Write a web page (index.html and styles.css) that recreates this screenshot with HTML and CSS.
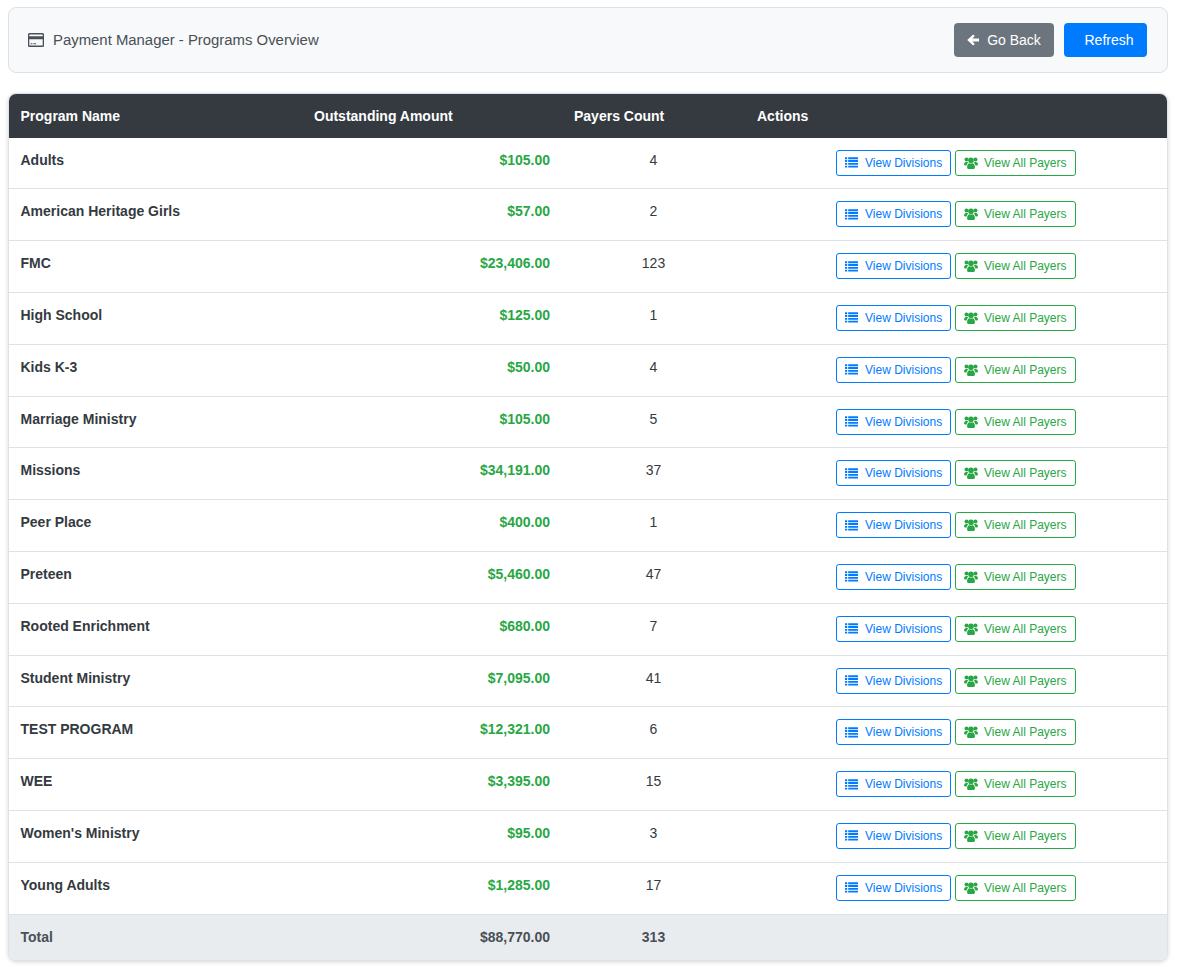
FILE: index.html
```html
<!DOCTYPE html>
<html lang="en">
<head>
    <meta charset="UTF-8">
    <meta name="viewport" content="width=device-width, initial-scale=1.0">
    <title>Payment Manager - Programs Overview</title>
    <link rel="stylesheet" href="styles.css">
</head>
<body>
    <svg class="icon-defs" width="0" height="0" aria-hidden="true">
        <symbol id="i-list" viewBox="0 0 13 11">
            <path d="M0 .3h2.2v1.9H0zM3.2 .3H13v1.9H3.2zM0 3.1h2.2V5H0zM3.2 3.1H13V5H3.2zM0 5.9h2.2v1.9H0zM3.2 5.9H13v1.9H3.2zM0 8.7h2.2v1.9H0zM3.2 8.7H13v1.9H3.2z"/>
        </symbol>
        <symbol id="i-users" viewBox="0 0 14 12">
            <circle cx="2.5" cy="2.6" r="2"/>
            <circle cx="11.5" cy="2.6" r="2"/>
            <circle cx="7" cy="3.2" r="2.8"/>
            <path d="M0 7.4C0 6 .9 5 2.1 5h.9c.6 0 1.1.2 1.5.5-1 .7-1.7 1.7-1.9 2.9H.9C.4 8.4 0 8 0 7.6zM14 7.4C14 6 13.1 5 11.9 5H11c-.6 0-1.1.2-1.5.5 1 .7 1.7 1.7 1.9 2.9h1.7c.5 0 .9-.4.9-.8z"/>
            <path d="M3.1 10C3.1 8 4.3 6.2 5.6 6.2c.4 0 .8.3 1.4.3s1-.3 1.4-.3c1.3 0 2.5 1.8 2.5 3.8v.8c0 .7-.5 1.2-1.1 1.2H4.2c-.6 0-1.1-.5-1.1-1.2z"/>
        </symbol>
    </svg>

    <header class="page-header">
        <h1 class="page-title">
            <svg class="title-icon" viewBox="0 0 16 14" aria-hidden="true">
                <path fill-rule="evenodd" d="M1.6 0h12.8C15.3 0 16 .7 16 1.6v10.8c0 .9-.7 1.6-1.6 1.6H1.6C.7 14 0 13.3 0 12.4V1.6C0 .7.7 0 1.6 0zM1.3 1.4v1.9h13.4V1.4zM1.3 6.2v6.4h13.4V6.2zM2.6 10.2h1.8v1.1H2.6zM5.4 10.2h2.6v1.1H5.4z"/>
            </svg>
            <span class="title-text">Payment Manager - Programs Overview</span>
        </h1>
        <div class="header-actions">
            <button class="btn btn-secondary" type="button">
                <svg class="back-icon" viewBox="0 0 12 12" aria-hidden="true">
                    <path d="M6.2.4l1.6 1.6-2.5 2.4H12v3.2H5.3l2.5 2.4-1.6 1.6L.2 6z"/>
                </svg>
                Go Back
            </button>
            <button class="btn btn-primary" type="button">Refresh</button>
        </div>
    </header>

    <div class="table-card">
        <table class="programs-table">
            <colgroup>
                <col class="col-name">
                <col class="col-amount">
                <col class="col-count">
                <col class="col-actions">
            </colgroup>
            <thead>
                <tr>
                    <th>Program Name</th>
                    <th>Outstanding Amount</th>
                    <th>Payers Count</th>
                    <th>Actions</th>
                </tr>
            </thead>
            <tbody id="program-rows"></tbody>
            <tfoot>
                <tr>
                    <td>Total</td>
                    <td class="amount">$88,770.00</td>
                    <td class="count">313</td>
                    <td></td>
                </tr>
            </tfoot>
        </table>
    </div>

    <script>
        const programs = [
            ["Adults", "$105.00", 4],
            ["American Heritage Girls", "$57.00", 2],
            ["FMC", "$23,406.00", 123],
            ["High School", "$125.00", 1],
            ["Kids K-3", "$50.00", 4],
            ["Marriage Ministry", "$105.00", 5],
            ["Missions", "$34,191.00", 37],
            ["Peer Place", "$400.00", 1],
            ["Preteen", "$5,460.00", 47],
            ["Rooted Enrichment", "$680.00", 7],
            ["Student Ministry", "$7,095.00", 41],
            ["TEST PROGRAM", "$12,321.00", 6],
            ["WEE", "$3,395.00", 15],
            ["Women's Ministry", "$95.00", 3],
            ["Young Adults", "$1,285.00", 17]
        ];

        let rowsHTML = "";
        programs.forEach(item => {
            rowsHTML += `<tr>
                <td class="name">${item[0]}</td>
                <td class="amount">${item[1]}</td>
                <td class="count">${item[2]}</td>
                <td class="actions">
                    <button class="btn-sm btn-outline-blue" type="button"><svg class="sm-icon list-icon"><use href="#i-list"/></svg>View Divisions</button>
                    <button class="btn-sm btn-outline-green" type="button"><svg class="sm-icon users-icon"><use href="#i-users"/></svg>View All Payers</button>
                </td>
            </tr>`;
        });
        document.getElementById("program-rows").innerHTML = rowsHTML;
    </script>
</body>
</html>
```

FILE: styles.css
```css
body {
    margin: 0;
    padding: 7px 10px 10px 8px;
    background-color: #fff;
    color: #212529;
    font-family: "Liberation Sans", Arial, sans-serif;
    font-size: 14px;
}

.icon-defs {
    display: block;
    height: 0;
}

/* Top bar */
.page-header {
    display: flex;
    align-items: center;
    justify-content: space-between;
    box-sizing: border-box;
    height: 66px;
    padding: 0 20px 0 19px;
    margin-bottom: 20px;
    background-color: #f8f9fa;
    border: 1px solid #dee2e6;
    border-radius: 8px;
}

.page-title {
    display: flex;
    align-items: center;
    gap: 9px;
    margin: 0;
    color: #495057;
    font-size: 14.9px;
    font-weight: 400;
}

.title-text {
    padding-bottom: 1px;
}

.title-icon {
    width: 16px;
    height: 14px;
    fill: #495057;
}

.header-actions {
    display: flex;
    gap: 10px;
}

.btn {
    display: flex;
    align-items: center;
    justify-content: center;
    height: 34px;
    padding: 0;
    border: none;
    border-radius: 4px;
    color: #fff;
    font-family: inherit;
    font-size: 14px;
}

.btn-secondary {
    width: 100px;
    gap: 8px;
    background-color: #6c757d;
}

.btn-primary {
    width: 83px;
    padding-left: 7px;
    background-color: #007bff;
}

.back-icon {
    width: 12px;
    height: 12px;
    fill: #fff;
}

/* Table */
.table-card {
    overflow: hidden;
    background-color: #fff;
    border: 1px solid #dee2e6;
    border-radius: 8px;
    box-shadow: 0 1px 4px rgba(0, 0, 0, 0.16);
}

.programs-table {
    width: 100%;
    border-collapse: collapse;
    table-layout: fixed;
}

.col-name { width: 293px; }
.col-amount { width: 260px; }
.col-count { width: 183px; }

th {
    height: 43.6px;
    padding: 0 12px;
    background-color: #343a40;
    color: #fff;
    font-size: 14px;
    font-weight: 700;
    text-align: left;
}

th:first-child,
td:first-child {
    padding-left: 11.5px;
}

tbody td {
    box-sizing: border-box;
    height: 51.8px;
    padding: 12px 12px 0;
    border-bottom: 1px solid #dee2e6;
    vertical-align: top;
    line-height: 20px;
}

tbody tr:first-child td {
    height: 51.3px;
}

.name {
    color: #343a40;
    font-weight: 700;
}

td.amount {
    color: #28a745;
    font-weight: 700;
    text-align: right;
}

td.count {
    color: #343a40;
    text-align: center;
}

td.actions {
    font-size: 0;
    text-align: center;
}

tfoot td {
    box-sizing: border-box;
    height: 45.9px;
    padding: 0 12px 1px;
    background-color: #e9ecef;
    color: #495057;
    font-weight: 700;
}

tfoot td.amount {
    color: #495057;
}

tfoot td.count {
    color: #495057;
    font-weight: 700;
}

.btn-sm {
    display: inline-flex;
    align-items: center;
    box-sizing: border-box;
    height: 26px;
    padding: 0 0 0 8px;
    background-color: #fff;
    border: 1px solid;
    border-radius: 3px;
    font-family: inherit;
    font-size: 12px;
    white-space: nowrap;
    vertical-align: top;
}

.btn-outline-blue {
    width: 115px;
    margin-right: 4px;
    border-color: #007bff;
    color: #007bff;
}

.btn-outline-green {
    width: 121px;
    border-color: #28a745;
    color: #28a745;
}

.sm-icon {
    flex: none;
    fill: currentColor;
}

.list-icon {
    width: 13px;
    height: 11px;
    margin-right: 7px;
}

.users-icon {
    width: 14px;
    height: 12px;
    margin-right: 6px;
}
```
